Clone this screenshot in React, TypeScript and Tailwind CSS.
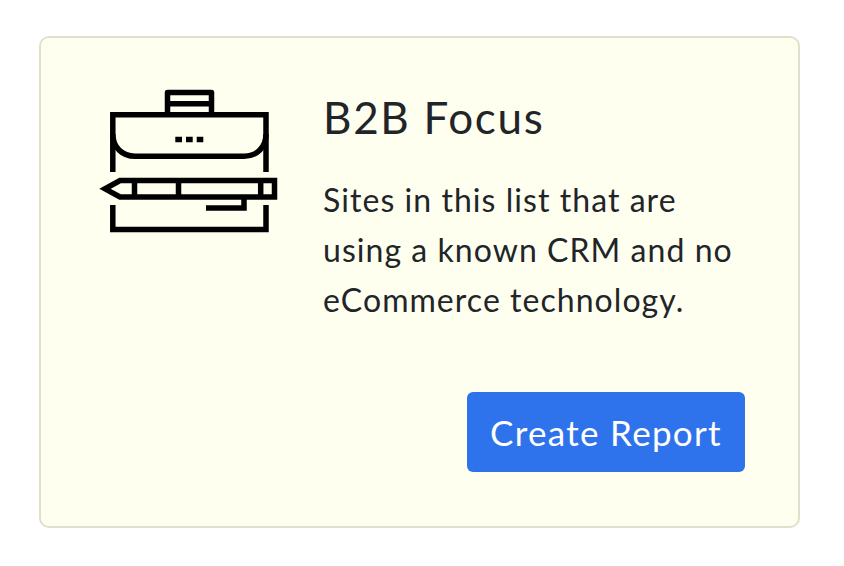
export default function App() {
  return (
    <div className="w-[844px] h-[566px] bg-white pt-9 pl-[39px] font-['Lato','Noto_Sans',sans-serif] text-[#212529]">
      <div className="w-[761px] h-[492px] bg-[#ffffef] border-2 border-[#e0e1cb] rounded-[10px] flex pl-[49px] pr-[53px] pt-[42px]">
        <svg width="200" height="160" viewBox="0 0 200 160" fill="none" stroke="#000" strokeWidth="5.5" className="shrink-0">
          <path d="M77.5 34V12.5H121.5V34M77.5 23.7H121.5" strokeLinejoin="round" />
          <path d="M22.8 92V34.7H176V92" />
          <path d="M22.8 54C22.8 67 32 76.3 45 76.3H154C167 76.3 176 67 176 54" />
          <path d="M85.3 59.5H92M96 59.5H102.7M106.7 59.5H113.3" />
          <path d="M184.5 100.5H30L15 108.8L30 117H184.5Z" />
          <path d="M44.5 100.5V117M88.5 100.5V117M170.7 100.5V117" />
          <path d="M22.8 125V149.5H176V125" />
          <path d="M116 128H154V119" />
        </svg>
        <div className="flex-1 ml-[33px] flex flex-col">
          <h2 className="text-[44px] leading-[50px] tracking-[1.7px] mt-[12px]">B2B Focus</h2>
          <p className="text-[32px] leading-[50px] tracking-[1.05px] mt-[33px]">
            Sites in this list that are
            <br />
            using a known CRM and no
            <br />
            eCommerce technology.
          </p>
          <div className="flex justify-end mt-[67px]">
            <button className="w-[278px] h-[80px] bg-[#2f73ec] text-white text-[35px] tracking-[1.3px] rounded-[6px]">
              Create Report
            </button>
          </div>
        </div>
      </div>
    </div>
  );
}
